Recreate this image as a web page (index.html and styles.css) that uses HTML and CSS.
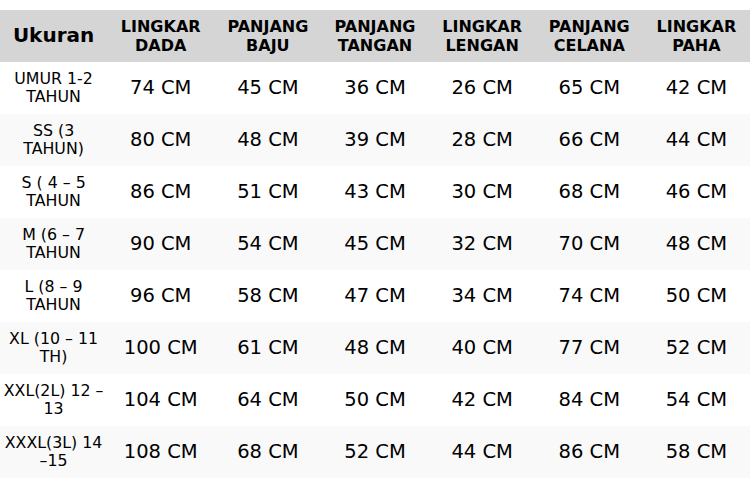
FILE: index.html
```html
<!DOCTYPE html>
<html>
<head>
<meta charset="utf-8">
<link rel="stylesheet" href="styles.css">
</head>
<body>
<table class="size-table">
  <thead>
    <tr>
      <th class="first">Ukuran</th>
      <th>LINGKAR<br>DADA</th>
      <th>PANJANG<br>BAJU</th>
      <th>PANJANG<br>TANGAN</th>
      <th>LINGKAR<br>LENGAN</th>
      <th>PANJANG<br>CELANA</th>
      <th>LINGKAR<br>PAHA</th>
    </tr>
  </thead>
  <tbody>
    <tr><td class="size">UMUR 1-2<br>TAHUN</td><td>74 CM</td><td>45 CM</td><td>36 CM</td><td>26 CM</td><td>65 CM</td><td>42 CM</td></tr>
    <tr><td class="size">SS (3<br>TAHUN)</td><td>80 CM</td><td>48 CM</td><td>39 CM</td><td>28 CM</td><td>66 CM</td><td>44 CM</td></tr>
    <tr><td class="size">S ( 4 – 5<br>TAHUN</td><td>86 CM</td><td>51 CM</td><td>43 CM</td><td>30 CM</td><td>68 CM</td><td>46 CM</td></tr>
    <tr><td class="size">M (6 – 7<br>TAHUN</td><td>90 CM</td><td>54 CM</td><td>45 CM</td><td>32 CM</td><td>70 CM</td><td>48 CM</td></tr>
    <tr><td class="size">L (8 – 9<br>TAHUN</td><td>96 CM</td><td>58 CM</td><td>47 CM</td><td>34 CM</td><td>74 CM</td><td>50 CM</td></tr>
    <tr><td class="size">XL (10 – 11<br>TH)</td><td>100 CM</td><td>61 CM</td><td>48 CM</td><td>40 CM</td><td>77 CM</td><td>52 CM</td></tr>
    <tr><td class="size">XXL(2L) 12 –<br>13</td><td>104 CM</td><td>64 CM</td><td>50 CM</td><td>42 CM</td><td>84 CM</td><td>54 CM</td></tr>
    <tr><td class="size">XXXL(3L) 14<br>–15</td><td>108 CM</td><td>68 CM</td><td>52 CM</td><td>44 CM</td><td>86 CM</td><td>58 CM</td></tr>
  </tbody>
</table>
</body>
</html>
```
FILE: styles.css
```css
html, body {
  margin: 0;
  padding: 0;
  background: #ffffff;
}
body {
  padding-top: 10px;
  font-family: "DejaVu Sans", sans-serif;
  color: #000;
}
.size-table {
  width: 750px;
  table-layout: fixed;
  border-collapse: collapse;
  border-spacing: 0;
}
.size-table th,
.size-table td {
  padding: 0;
  text-align: center;
  vertical-align: middle;
  white-space: nowrap;
}
.size-table thead tr {
  height: 51.5px;
  background: #d5d5d5;
}
.size-table th {
  font-size: 16px;
  font-weight: bold;
  line-height: 19px;
}
.size-table th.first {
  font-size: 20px;
}
.size-table tbody tr {
  height: 52px;
  background: #ffffff;
}
.size-table tbody tr:nth-child(even) {
  background: #f9f9f9;
}
.size-table td {
  font-size: 19.5px;
  line-height: 22px;
}
.size-table td.size {
  font-size: 15.8px;
  line-height: 18px;
}
```
